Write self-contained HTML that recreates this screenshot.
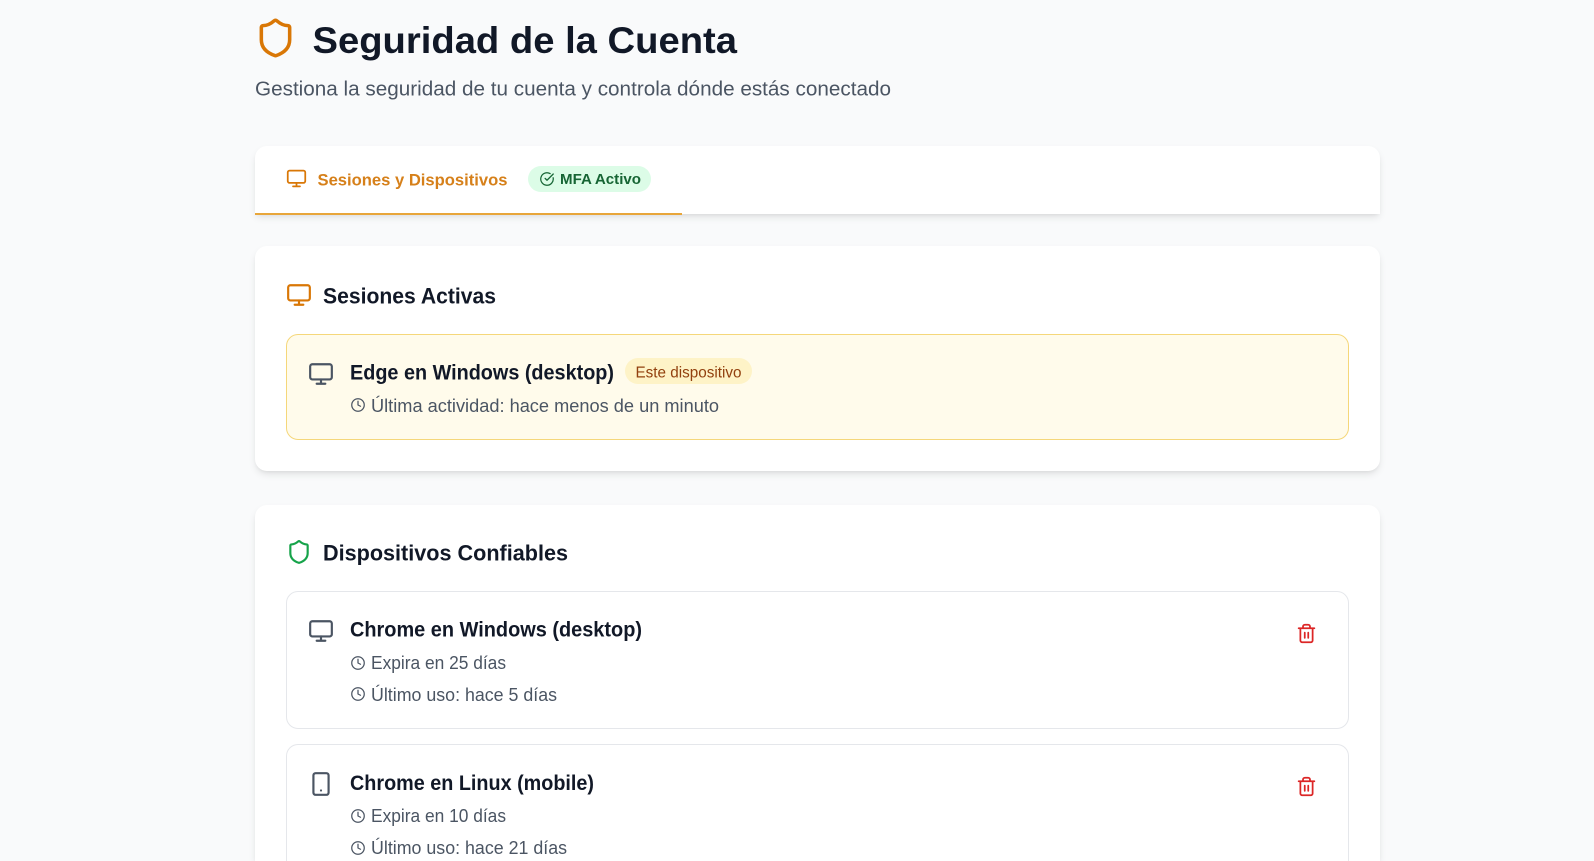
<!DOCTYPE html>
<html lang="es">
<head>
<meta charset="utf-8">
<title>Seguridad de la Cuenta</title>
<style>
html,body{margin:0;padding:0;width:1594px;height:861px;overflow:hidden;background:#f9fafb;font-family:"Liberation Sans",sans-serif}
#page{position:relative;width:1594px;height:861px;overflow:hidden;background:#f9fafb}
.box{position:absolute;box-sizing:border-box}
.card{background:#fff;border-radius:12px;box-shadow:0 4px 8px -1px rgba(0,0,0,.1),0 2px 4px -2px rgba(0,0,0,.08)}
.item{background:#fff;border:1px solid #e5e7eb;border-radius:12px}
svg.layer{position:absolute;left:0;top:0}
text{font-family:"Liberation Sans",sans-serif}
.b{font-weight:700}
.ic{fill:none;stroke:currentColor;stroke-width:2;stroke-linecap:round;stroke-linejoin:round}
</style>
</head>
<body>
<div id="page">
<div class="box card" style="left:255px;top:146px;width:1125px;height:68px;border-radius:12px 12px 0 0"></div>
<div class="box" style="left:255px;top:213px;width:427px;height:2px;background:#e8a63a"></div>
<div class="box" style="left:528px;top:166px;width:123px;height:26px;background:#dcfce7;border-radius:13px"></div>

<div class="box card" style="left:255px;top:246px;width:1125px;height:225px"></div>
<div class="box" style="left:286px;top:334px;width:1063px;height:106px;background:#fffbeb;border:1px solid #f5d77a;border-radius:12px"></div>
<div class="box" style="left:625px;top:358px;width:127px;height:26px;background:#fef3c7;border-radius:13px"></div>

<div class="box card" style="left:255px;top:505px;width:1125px;height:356px;border-radius:12px 12px 0 0"></div>
<div class="box item" style="left:286px;top:591px;width:1063px;height:138px"></div>
<div class="box item" style="left:286px;top:744px;width:1063px;height:117px;border-bottom:0;border-radius:12px 12px 0 0"></div>

<svg class="layer" width="1594" height="861" viewBox="0 0 1594 861" xmlns="http://www.w3.org/2000/svg">
<defs>
<symbol id="shield" viewBox="0 0 24 24"><path class="ic" d="M20 13c0 5-3.500 7.500-7.660 8.950a1 1 0 0 1-.67-.01C7.500 20.500 4 18 4 13V6a1 1 0 0 1 1-1c2 0 4.500-1.200 6.240-2.720a1.170 1.170 0 0 1 1.520 0C14.510 3.810 17 5 19 5a1 1 0 0 1 1 1z"/></symbol>
<symbol id="monitor" viewBox="0 0 24 24"><rect class="ic" x="2" y="3" width="20" height="14" rx="2"/><path class="ic" d="M8 21h8M12 17v4"/></symbol>
<symbol id="phone" viewBox="0 0 24 24"><rect class="ic" x="5" y="2" width="14" height="20" rx="2"/><path class="ic" d="M12 18h.01"/></symbol>
<symbol id="clock" viewBox="0 0 24 24"><circle class="ic" cx="12" cy="12" r="10"/><path class="ic" d="M12 6v6l4 2"/></symbol>
<symbol id="check" viewBox="0 0 24 24"><path class="ic" d="M21.801 10A10 10 0 1 1 17 3.335"/><path class="ic" d="m9 11 3 3L22 4"/></symbol>
<symbol id="trash" viewBox="0 0 24 24"><path class="ic" d="M3 6h18M19 6v14c0 1-1 2-2 2H7c-1 0-2-1-2-2V6M8 6V4c0-1 1-2 2-2h4c1 0 2 1 2 2v2M10 11v6M14 11v6"/></symbol>
</defs>

<!-- header -->
<use href="#shield" x="254.250" y="16.750" width="42.500" height="42.500" color="#d97706"/>
<text x="312.500" y="53" class="b" font-size="37" fill="#111827" textLength="424.500" lengthAdjust="spacingAndGlyphs">Seguridad de la Cuenta</text>
<text x="255" y="95.500" font-size="20" fill="#4b5563" textLength="636" lengthAdjust="spacingAndGlyphs">Gestiona la seguridad de tu cuenta y controla dónde estás conectado</text>

<!-- tabs -->
<use href="#monitor" x="286" y="168" width="21" height="21" color="#d97706"/>
<text x="317.500" y="185.500" class="b" font-size="17" fill="#d6801a" textLength="190" lengthAdjust="spacingAndGlyphs">Sesiones y Dispositivos</text>
<use href="#check" x="539.500" y="171.500" width="15" height="15" color="#166534"/>
<text x="560" y="184" class="b" font-size="15" fill="#166534" textLength="81" lengthAdjust="spacingAndGlyphs">MFA Activo</text>

<!-- sesiones -->
<use href="#monitor" x="286" y="282" width="26" height="26" color="#d97706"/>
<text x="323" y="303.500" class="b" font-size="22" fill="#111827" textLength="173" lengthAdjust="spacingAndGlyphs">Sesiones Activas</text>
<use href="#monitor" x="308" y="361" width="26" height="26" color="#4b5563"/>
<text x="350" y="379.500" class="b" font-size="21" fill="#111827" textLength="264" lengthAdjust="spacingAndGlyphs">Edge en Windows (desktop)</text>
<text x="635.500" y="377.500" font-size="15.500" fill="#92400e" textLength="106" lengthAdjust="spacingAndGlyphs">Este dispositivo</text>
<use href="#clock" x="350.500" y="397.500" width="15" height="15" color="#4b5563"/>
<text x="371" y="412" font-size="18" fill="#4b5563" textLength="348" lengthAdjust="spacingAndGlyphs">Última actividad: hace menos de un minuto</text>

<!-- confiables -->
<use href="#shield" x="286" y="539" width="26" height="26" color="#16a34a"/>
<text x="323" y="560.500" class="b" font-size="22" fill="#111827" textLength="245" lengthAdjust="spacingAndGlyphs">Dispositivos Confiables</text>

<use href="#monitor" x="308" y="618" width="26" height="26" color="#4b5563"/>
<text x="350" y="636.500" class="b" font-size="21" fill="#111827" textLength="292" lengthAdjust="spacingAndGlyphs">Chrome en Windows (desktop)</text>
<use href="#clock" x="350.500" y="655.500" width="15" height="15" color="#4b5563"/>
<text x="371" y="669" font-size="18" fill="#4b5563" textLength="135" lengthAdjust="spacingAndGlyphs">Expira en 25 días</text>
<use href="#clock" x="350.500" y="686.500" width="15" height="15" color="#4b5563"/>
<text x="371" y="701" font-size="18" fill="#4b5563" textLength="186" lengthAdjust="spacingAndGlyphs">Último uso: hace 5 días</text>
<use href="#trash" x="1296" y="623" width="21" height="21" color="#dc2626"/>

<use href="#phone" x="308" y="771" width="26" height="26" color="#4b5563"/>
<text x="350" y="790" class="b" font-size="21" fill="#111827" textLength="244" lengthAdjust="spacingAndGlyphs">Chrome en Linux (mobile)</text>
<use href="#clock" x="350.500" y="808.500" width="15" height="15" color="#4b5563"/>
<text x="371" y="822" font-size="18" fill="#4b5563" textLength="135" lengthAdjust="spacingAndGlyphs">Expira en 10 días</text>
<use href="#clock" x="350.500" y="840.500" width="15" height="15" color="#4b5563"/>
<text x="371" y="854" font-size="18" fill="#4b5563" textLength="196" lengthAdjust="spacingAndGlyphs">Último uso: hace 21 días</text>
<use href="#trash" x="1296" y="776" width="21" height="21" color="#dc2626"/>
</svg>
</div>
</body>
</html>
